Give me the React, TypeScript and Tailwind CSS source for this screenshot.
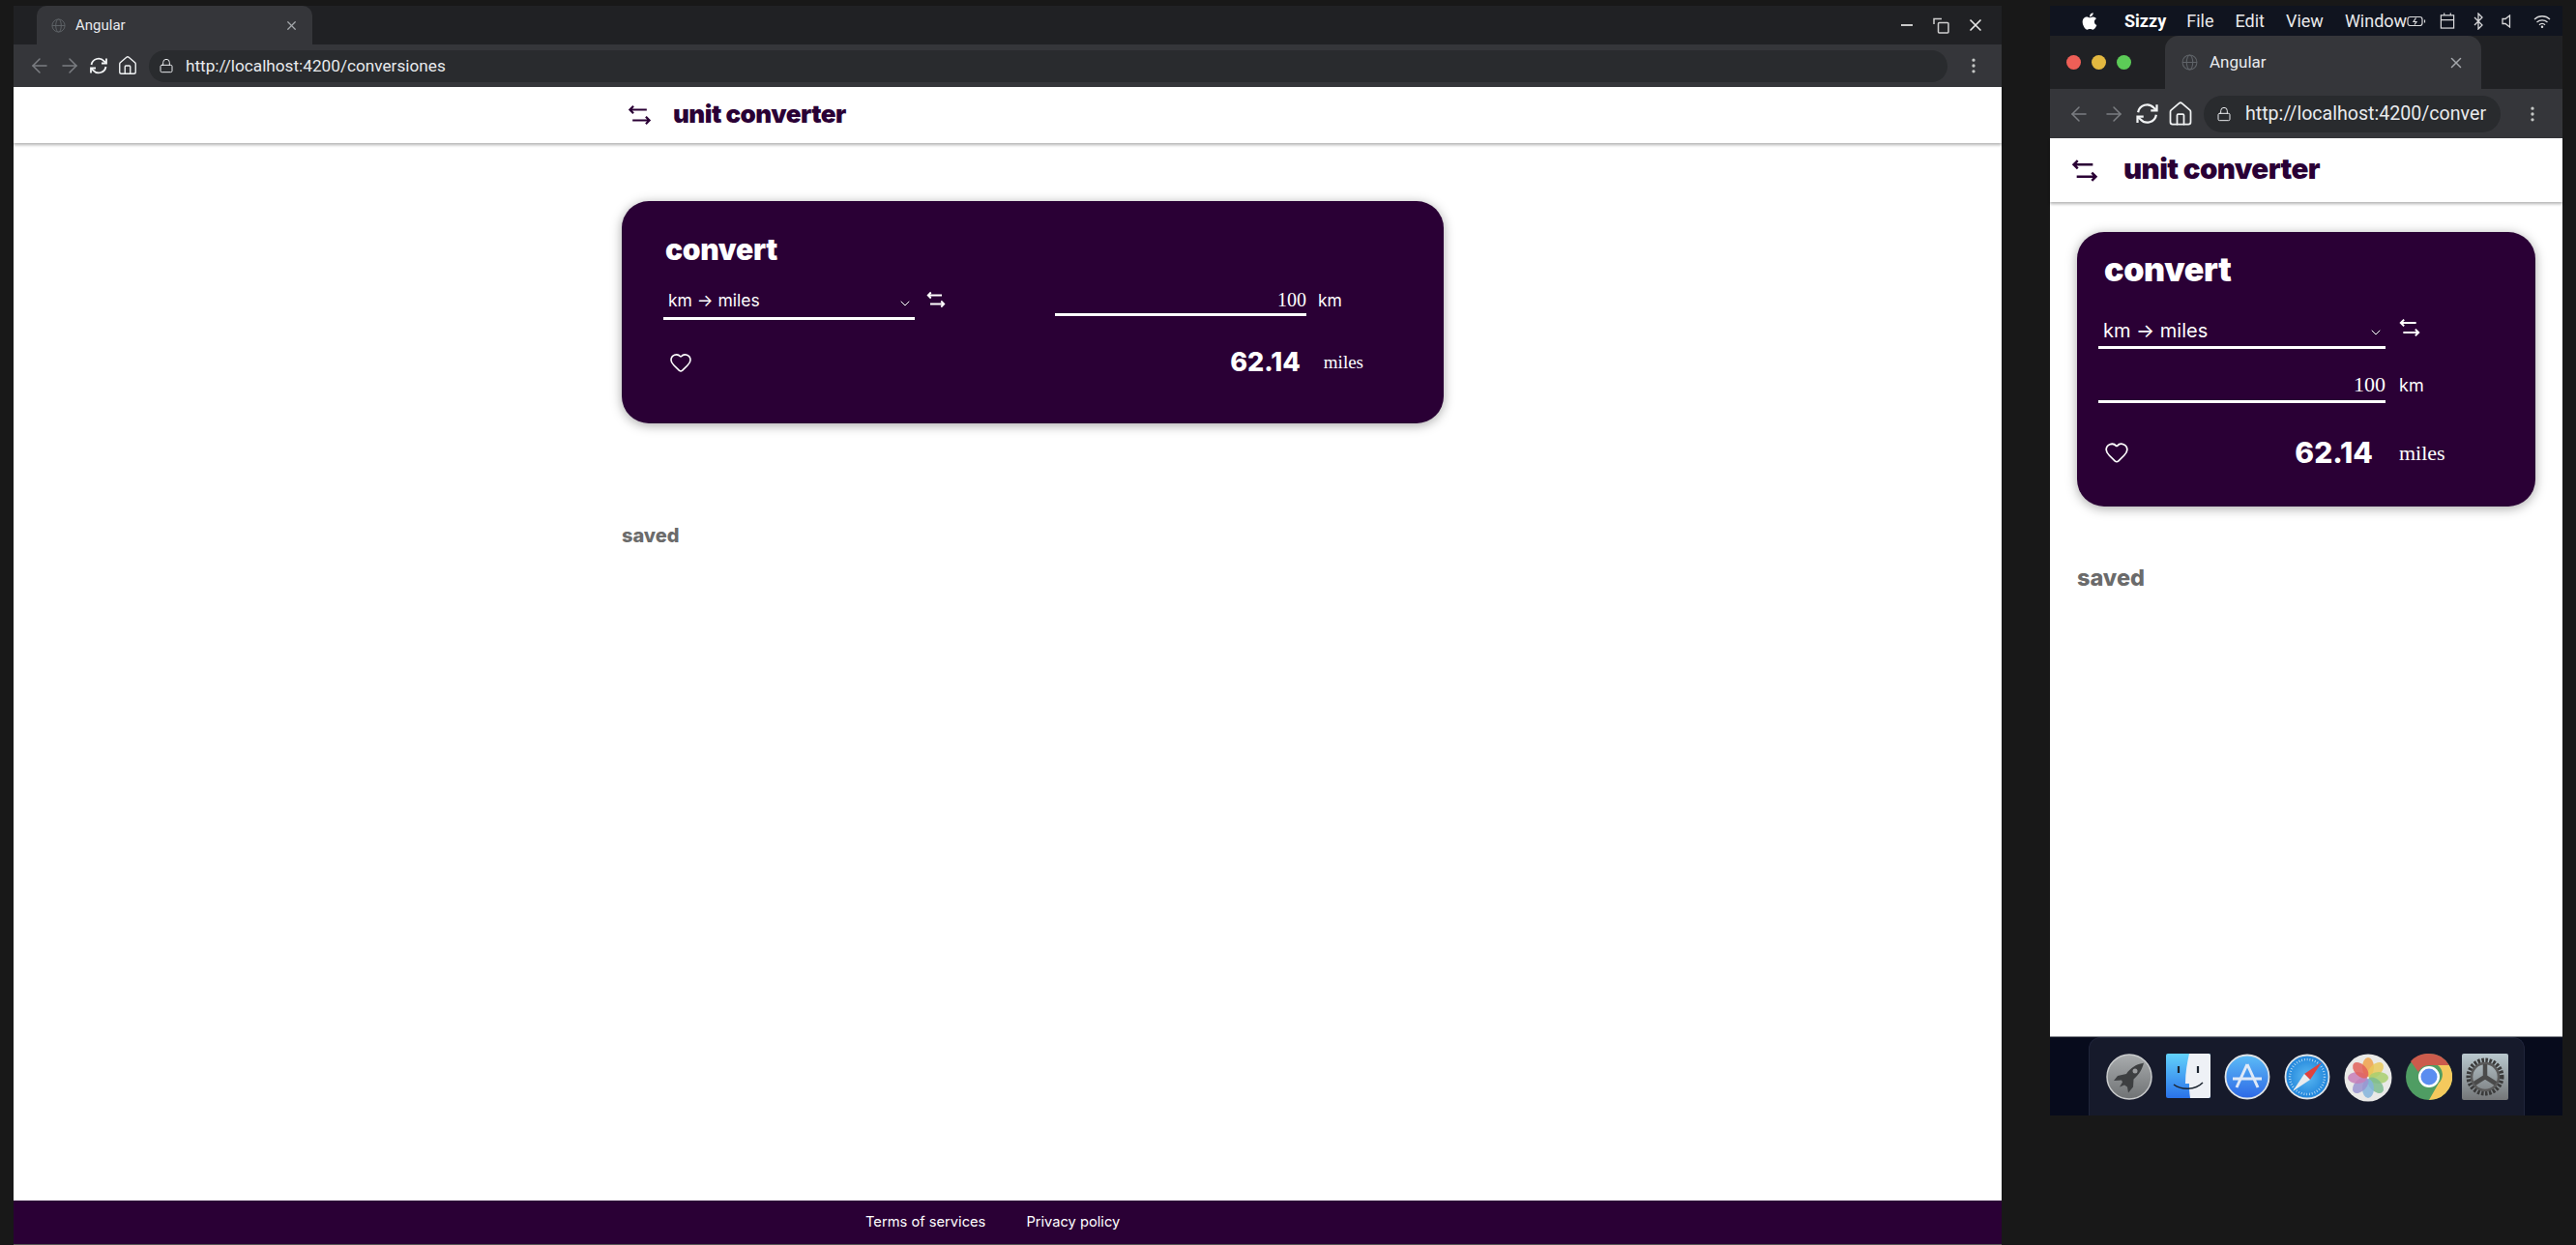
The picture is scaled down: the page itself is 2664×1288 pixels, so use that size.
import { ArrowLeft, ArrowRight, ChevronDown, Heart, Home, Lock, MoreVertical, X } from "lucide-react";
import { FaApple } from "react-icons/fa";

// Both browser windows share the chrome bits; the converter page is laid out
// twice because the narrow one wraps the input under the select.

function SwapIcon({ className }: { className: string }) {
  return (
    <svg viewBox="0 0 26 24" fill="none" stroke="currentColor" strokeWidth="2.4" className={className}>
      <path d="M21 6H2M6 2 2 6l4 4" />
      <path d="M5 18h19M20 14l4 4-4 4" />
    </svg>
  );
}

function GlobeIcon({ className }: { className: string }) {
  return (
    <svg viewBox="0 0 16 16" fill="none" stroke="#5f6368" strokeWidth="1" className={`shrink-0 ${className}`}>
      <circle cx="8" cy="8" r="7" />
      <ellipse cx="8" cy="8" rx="3" ry="7" />
      <path d="M1 8h14" />
    </svg>
  );
}

function ReloadIcon({ className }: { className: string }) {
  return (
    <svg viewBox="0 0 20 20" fill="none" stroke="#f1f3f4" strokeWidth="1.800" className={`shrink-0 ${className}`}>
      <path d="M2.500 9a7.500 7.500 0 0 1 13-3.800L17.500 7" />
      <path d="M18 2.500V7.500h-5" />
      <path d="M17.500 11a7.500 7.500 0 0 1-13 3.800L2.500 13" />
      <path d="M2 17.500V12.500h5" />
    </svg>
  );
}

function WideToolbar() {
  return (
    <div className="flex h-[44px] shrink-0 items-center bg-[#35363a] pl-[15px] pr-[19px] font-['Roboto',sans-serif]">
      <ArrowLeft size={24} strokeWidth={1.500} color="#7b7e82" className="shrink-0" />
      <ArrowRight size={24} strokeWidth={1.500} color="#7b7e82" className="ml-[7px] shrink-0" />
      <ReloadIcon className="ml-[8px] h-5 w-5" />
      <Home size={22} strokeWidth={1.500} color="#f1f3f4" className="ml-[9px] shrink-0" />
      <div className="ml-[11px] flex h-[33px] w-[1860px] items-center overflow-hidden rounded-full bg-[#292b2e] text-[17.200px] text-[#e8eaed]">
        <Lock size={16} strokeWidth={1.500} color="#e8eaed" className="ml-[10px] shrink-0" />
        <span className="ml-[12px] whitespace-nowrap pt-[2px]">http://localhost:4200/conversiones</span>
      </div>
      <MoreVertical size={20} color="#c4c7c5" className="ml-auto shrink-0" />
    </div>
  );
}

function NarrowToolbar() {
  return (
    <div className="flex h-[51px] shrink-0 items-center bg-[#35363a] pl-[18px] pr-[21px] font-['Roboto',sans-serif]">
      <ArrowLeft size={24} strokeWidth={1.500} color="#7b7e82" className="shrink-0" />
      <ArrowRight size={24} strokeWidth={1.500} color="#7b7e82" className="ml-[12px] shrink-0" />
      <ReloadIcon className="ml-[10px] h-[25px] w-[25px]" />
      <Home size={28} strokeWidth={1.500} color="#f1f3f4" className="ml-[8px] shrink-0" />
      <div className="ml-[10px] flex h-[38px] w-[307px] items-center overflow-hidden rounded-full bg-[#292b2e] text-[19.600px] text-[#e8eaed]">
        <Lock size={16} strokeWidth={1.500} color="#e8eaed" className="ml-[13px] shrink-0" />
        <span className="ml-[14px] whitespace-nowrap">http://localhost:4200/conver</span>
      </div>
      <MoreVertical size={20} color="#c4c7c5" className="ml-auto shrink-0" />
    </div>
  );
}

function Header({ className, iconClass, titleClass }: { className: string; iconClass: string; titleClass: string }) {
  return (
    <header className={`relative z-10 flex shrink-0 items-center bg-white text-[#2a0035] shadow-[0_2px_3px_rgba(0,0,0,0.3)] ${className}`}>
      <SwapIcon className={iconClass} />
      <span className={`-mt-[3px] font-['Inter',sans-serif] font-black tracking-[-0.02em] ${titleClass}`}>unit converter</span>
    </header>
  );
}

function Select({ className }: { className: string }) {
  return (
    <div className={`flex items-center border-b-[3px] border-white font-['Inter',sans-serif] text-white ${className}`}>
      <span className="pl-[5px]">km → miles</span>
      <ChevronDown size={16} strokeWidth={1.500} className="ml-auto mr-[2px] mt-1" />
    </div>
  );
}

function NumberInput({ className }: { className: string }) {
  return (
    <div className={`border-b-[3px] border-white text-right font-['Liberation_Serif',serif] text-white ${className}`}>
      100
    </div>
  );
}

function WideConverter() {
  return (
    <div className="ml-[629px] w-[850px] pt-[60px]">
      <section className="h-[230px] rounded-[28px] bg-[#2a0035] pl-[43px] pr-[82px] pt-[32px] text-white shadow-[0_2px_12px_rgba(0,0,0,0.35)]">
        <h2 className="pl-[2px] font-['Inter',sans-serif] text-[30px] font-black leading-[36px] tracking-[-0.01em]">convert</h2>
        <div className="mt-[19px] flex items-start">
          <Select className="h-[36px] w-[260px] text-[17.500px]" />
          <SwapIcon className="ml-[12px] mt-[6px] h-[18px] w-[20px]" />
          <NumberInput className="ml-[113px] h-[32px] w-[260px] text-[20px] leading-[30px]" />
          <span className="ml-[12px] mt-[3px] font-['Inter',sans-serif] text-[17.500px]">km</span>
        </div>
        <div className="mt-[24px] flex items-center">
          <Heart size={24} strokeWidth={1.600} className="ml-[6px]" />
          <span className="ml-auto font-['Inter',sans-serif] text-[27px] font-extrabold leading-[40px]">62.14</span>
          <span className="ml-[24px] mr-[1px] font-['Liberation_Serif',serif] text-[19px]">miles</span>
        </div>
      </section>
      <h3 className="mt-[103px] font-['Inter',sans-serif] text-[20px] font-extrabold leading-[26px] text-[#6b6b6b]">saved</h3>
    </div>
  );
}

function NarrowConverter() {
  return (
    <div className="px-[28px] pt-[31px]">
      <section className="h-[284px] rounded-[28px] bg-[#2a0035] pl-[22px] pt-[19px] text-white shadow-[0_2px_12px_rgba(0,0,0,0.35)]">
        <h2 className="pl-[6px] font-['Inter',sans-serif] text-[34px] font-black leading-[40px] tracking-[-0.01em]">convert</h2>
        <div className="mt-[26px] flex items-start">
          <Select className="h-[36px] w-[297px] text-[20px]" />
          <SwapIcon className="ml-[14px] mt-[4px] h-[20px] w-[22px]" />
        </div>
        <div className="mt-[20px] flex items-start">
          <NumberInput className="h-[36px] w-[297px] text-[22px] leading-[34px]" />
          <span className="ml-[14px] mt-[4px] font-['Inter',sans-serif] text-[18px]">km</span>
        </div>
        <div className="mt-[31px] flex w-[371px] items-center">
          <Heart size={26} strokeWidth={1.600} className="ml-[6px]" />
          <span className="ml-auto font-['Inter',sans-serif] text-[30px] font-extrabold leading-[40px]">62.14</span>
          <span className="ml-[27px] w-[60px] font-['Liberation_Serif',serif] text-[22px]">miles</span>
        </div>
      </section>
      <h3 className="mt-[60px] font-['Inter',sans-serif] text-[23.500px] font-extrabold leading-[28px] text-[#6b6b6b]">saved</h3>
    </div>
  );
}

function MenuBar() {
  return (
    <div className="flex h-[31px] shrink-0 items-center bg-[#10141f] pl-[31px] font-['Roboto',sans-serif] text-[18px] text-[#e8e8ea]">
      <FaApple size={20} className="shrink-0 text-white" />
      <span className="ml-[26px] font-bold text-white">Sizzy</span>
      <span className="ml-[21px]">File</span>
      <span className="ml-[22px]">Edit</span>
      <span className="ml-[22px]">View</span>
      <span className="ml-[22px]">Window</span>
      <svg viewBox="0 0 20 12" fill="none" stroke="#d8d8da" strokeWidth="1.200" className="h-[12px] w-[20px] shrink-0">
        <rect x="1" y="1.500" width="15" height="9" rx="2.500" />
        <path d="M9.500 2.500 7 6.500h3L8 9.500M18.500 4.500v3" />
      </svg>
      <svg viewBox="0 0 16 18" fill="none" stroke="#d8d8da" strokeWidth="1.300" className="ml-[14px] h-[17px] w-[16px] shrink-0">
        <rect x="1" y="3" width="14" height="14" />
        <path d="M1 8h14M4.500 0.500V3M11.500 0.500V3" />
      </svg>
      <svg viewBox="0 0 10 18" fill="none" stroke="#d8d8da" strokeWidth="1.300" className="ml-[19px] h-[18px] w-[10px] shrink-0">
        <path d="M1 5l8 8-4 4V1l4 4-8 8" />
      </svg>
      <svg viewBox="0 0 10 14" fill="none" stroke="#d8d8da" strokeWidth="1.300" className="ml-[19px] h-[14px] w-[10px] shrink-0">
        <path d="M8.500 1v12L4 9.500H1v-5h3z" />
      </svg>
      <svg viewBox="0 0 18 14" fill="none" stroke="#d8d8da" strokeWidth="1.300" className="ml-[23px] h-[14px] w-[18px] shrink-0">
        <path d="M1 5a11.500 11.500 0 0 1 16 0M3.500 8a8 8 0 0 1 11 0M6 10.700a4 4 0 0 1 6 0" />
        <circle cx="9" cy="12.800" r="0.600" />
      </svg>
    </div>
  );
}

function RocketIcon() {
  return (
    <svg viewBox="0 0 48 48" className="h-[48px] w-[48px] shrink-0">
      <defs>
        <linearGradient id="rocketBg" x1="0" y1="0" x2="0" y2="1">
          <stop offset="0" stopColor="#a9acae" />
          <stop offset="1" stopColor="#6f7274" />
        </linearGradient>
      </defs>
      <circle cx="24" cy="24" r="23" fill="url(#rocketBg)" stroke="#c9cbcc" strokeWidth="1.500" />
      <path d="M38 10c-7 1-13 5-17 11l-9 2-4 5 8-.500 1 2-3 5 5-2 3 2 1 6 5-6 .500-8c6-5 9-11 10.500-17z" fill="#3d3f41" />
      <circle cx="30" cy="18" r="2.500" fill="#9a9c9e" />
    </svg>
  );
}

function FinderIcon() {
  return (
    <svg viewBox="0 0 46 46" className="h-[46px] w-[46px] shrink-0">
      <defs>
        <linearGradient id="finderBlue" x1="0" y1="0" x2="0" y2="1">
          <stop offset="0" stopColor="#62d2fb" />
          <stop offset="1" stopColor="#2a72ea" />
        </linearGradient>
      </defs>
      <rect x="0" y="0" width="46" height="46" rx="2" fill="url(#finderBlue)" />
      <path d="M24 0h20a2 2 0 0 1 2 2v42a2 2 0 0 1-2 2H25c-1-6-1-10-1-15h-4c0-12 2-22 4-31z" fill="#eef1f6" />
      <path d="M13 13v7M33 13v7" stroke="#1c2530" strokeWidth="2.200" />
      <path d="M8 32c8 6 22 6 30-2" stroke="#1c2530" strokeWidth="1.500" fill="none" />
    </svg>
  );
}

function AppStoreIcon() {
  return (
    <svg viewBox="0 0 48 48" className="h-[48px] w-[48px] shrink-0">
      <defs>
        <linearGradient id="storeBg" x1="0" y1="0" x2="0" y2="1">
          <stop offset="0" stopColor="#5cbcf7" />
          <stop offset="1" stopColor="#2d68e6" />
        </linearGradient>
      </defs>
      <circle cx="24" cy="24" r="22.500" fill="url(#storeBg)" stroke="#dfe3e6" strokeWidth="1.800" />
      <path d="M24 11 13 35M24 11l11 24M9 26h30" stroke="#dfe9f7" strokeWidth="3" fill="none" />
    </svg>
  );
}

function SafariIcon() {
  return (
    <svg viewBox="0 0 48 48" className="h-[48px] w-[48px] shrink-0">
      <defs>
        <radialGradient id="safariBg">
          <stop offset="0" stopColor="#5bb9f2" />
          <stop offset="1" stopColor="#1f83da" />
        </radialGradient>
      </defs>
      <circle cx="24" cy="24" r="22.500" fill="url(#safariBg)" stroke="#dfe3e6" strokeWidth="1.800" />
      <circle cx="24" cy="24" r="18" fill="none" stroke="#bfe0f7" strokeWidth="2.500" strokeDasharray="0.800 2" />
      <path d="M39 9 21 21l6 6z" fill="#e0423e" />
      <path d="M9 39l12-18 6 6z" fill="#e9ecef" />
    </svg>
  );
}

const petals = [
  { angle: 0, fill: "#f0a24a" },
  { angle: 45, fill: "#e9c95a" },
  { angle: 90, fill: "#a8cf6e" },
  { angle: 135, fill: "#7dbb8f" },
  { angle: 180, fill: "#82b4dc" },
  { angle: 225, fill: "#9a94d0" },
  { angle: 270, fill: "#c77fb8" },
  { angle: 315, fill: "#e2625a" },
];

function PhotosIcon() {
  return (
    <svg viewBox="0 0 50 50" className="h-[50px] w-[50px] shrink-0">
      <circle cx="25" cy="25" r="24.500" fill="#e9e9e7" />
      {petals.map((petal) => (
        <ellipse
          key={petal.angle}
          cx="25"
          cy="14"
          rx="6"
          ry="10"
          fill={petal.fill}
          fillOpacity="0.850"
          transform={`rotate(${petal.angle} 25 25)`}
        />
      ))}
    </svg>
  );
}

function ChromeIcon() {
  return (
    <svg viewBox="0 0 48 48" className="h-[48px] w-[48px] shrink-0">
      <circle cx="24" cy="24" r="24" fill="#4f9d63" />
      <path d="M24 0a24 24 0 0 1 20.800 12H24a12 12 0 0 0-11 7L5 8A24 24 0 0 1 24 0z" fill="#cc5b4c" />
      <path d="M44.800 12A24 24 0 0 1 24 48l10-17.500A12 12 0 0 0 33 12z" fill="#f4c95d" />
      <circle cx="24" cy="24" r="11" fill="#fff" />
      <circle cx="24" cy="24" r="8.500" fill="#5a8df0" />
    </svg>
  );
}

function SettingsIcon() {
  return (
    <svg viewBox="0 0 48 48" className="-ml-[4px] h-[48px] w-[48px] shrink-0">
      <defs>
        <linearGradient id="settingsBg" x1="0" y1="0" x2="0" y2="1">
          <stop offset="0" stopColor="#b9c8ce" />
          <stop offset="1" stopColor="#747678" />
        </linearGradient>
      </defs>
      <rect width="48" height="48" rx="2" fill="url(#settingsBg)" />
      <circle cx="24" cy="24" r="17" fill="none" stroke="#3a3a3a" strokeWidth="5" strokeDasharray="2.500 1.500" />
      <circle cx="24" cy="24" r="14" fill="none" stroke="#5a5a5a" strokeWidth="2.500" />
      <path d="M24 24V11M24 24 13 31M24 24l11 7" stroke="#4a4a4a" strokeWidth="4.500" />
    </svg>
  );
}

function Dock() {
  return (
    <div className="flex h-[82px] shrink-0 justify-center border-t border-[#7c7f86] bg-[#070b1c]">
      <div className="flex h-[81px] w-[451px] items-start gap-[14px] rounded-t-[12px] border border-b-0 border-[#20253a] bg-[#161a2b] pl-[17px] pt-[16px]">
        <RocketIcon />
        <FinderIcon />
        <AppStoreIcon />
        <SafariIcon />
        <PhotosIcon />
        <ChromeIcon />
        <SettingsIcon />
      </div>
    </div>
  );
}

export default function App() {
  return (
    <div className="flex h-[1288px] w-[2664px] items-start overflow-hidden bg-[#181818] pl-[14px] pt-[6px]">
      {/* desktop-size window */}
      <div className="flex h-[1282px] w-[2056px] shrink-0 flex-col">
        <div className="flex h-[40px] shrink-0 items-end bg-[#202124] pl-[24px]">
          <div className="flex h-[40px] w-[285px] items-center rounded-t-[10px] bg-[#35363a] pl-[15px] pr-[14px] font-['Roboto',sans-serif] text-[15px] text-[#e8eaed]">
            <GlobeIcon className="h-[15px] w-[15px]" />
            <span className="ml-[10px]">Angular</span>
            <X size={15} color="#a4a7ab" className="ml-auto" />
          </div>
          <div className="ml-auto flex h-[40px] items-center pr-[17px]">
            <div className="h-[2px] w-[12px] bg-[#c8c8c8]" />
            <svg viewBox="0 0 17 17" fill="none" stroke="#d0d0d0" strokeWidth="1.500" className="ml-[21px] h-[17px] w-[17px]">
              <path d="M1 7V1.500h8" />
              <rect x="5.500" y="5.500" width="10.500" height="10.500" rx="1" />
            </svg>
            <X size={20} color="#e8e8e8" className="ml-[17px]" />
          </div>
        </div>
        <WideToolbar />
        <div className="flex min-h-0 flex-1 flex-col bg-white">
          <Header className="h-[58px] pl-[635px]" iconClass="h-[22px] w-[25px]" titleClass="ml-[22px] text-[26px]" />
          <main className="min-h-0 flex-1">
            <WideConverter />
          </main>
          <footer className="flex h-[45px] shrink-0 items-center gap-[42px] bg-[#2a0035] pl-[881px] font-['Inter',sans-serif] text-[14.700px] text-white">
            <span>Terms of services</span>
            <span>Privacy policy</span>
          </footer>
          <div className="h-[1px] shrink-0 bg-[#555]" />
        </div>
      </div>

      {/* phone-size window */}
      <div className="ml-[50px] flex h-[1148px] w-[530px] shrink-0 flex-col">
        <MenuBar />
        <div className="flex h-[55px] shrink-0 items-end bg-[#202124] pl-[17px]">
          <div className="mb-[20px] flex gap-[11px]">
            <div className="h-[15px] w-[15px] rounded-full bg-[#ee5f57]" />
            <div className="h-[15px] w-[15px] rounded-full bg-[#e3b840]" />
            <div className="h-[15px] w-[15px] rounded-full bg-[#5ccb57]" />
          </div>
          <div className="ml-[35px] flex h-[55px] w-[327px] items-center rounded-t-[14px] bg-[#35363a] pl-[17px] pr-[17px] font-['Roboto',sans-serif] text-[17px] text-[#e8eaed]">
            <GlobeIcon className="h-[17px] w-[17px]" />
            <span className="ml-[12px]">Angular</span>
            <X size={18} color="#a4a7ab" className="ml-auto" />
          </div>
        </div>
        <NarrowToolbar />
        <div className="flex min-h-0 flex-1 flex-col bg-white">
          <Header className="h-[66px] pl-[22px]" iconClass="h-[25px] w-[28px]" titleClass="ml-[26px] text-[29.500px]" />
          <main className="min-h-0 flex-1">
            <NarrowConverter />
          </main>
        </div>
        <Dock />
      </div>
    </div>
  );
}
